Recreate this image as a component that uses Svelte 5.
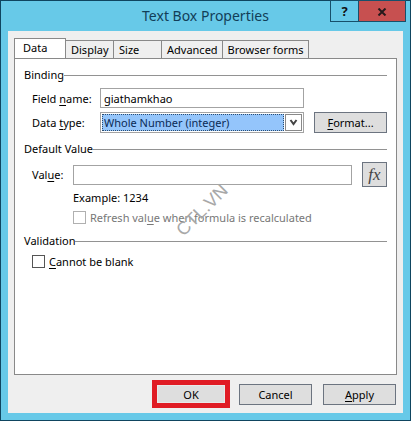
<script>
	let activeTab = "Data";
	let fieldName = "giathamkhao";
	let dataType = "integer";
	let defaultValue = "";
	let notBlank = false;

	const tabs = ["Data", "Display", "Size", "Advanced", "Browser forms"];
</script>

<main class="window">
	<header>
		<h1>Text Box Properties</h1>
		<div class="caption-buttons">
			<button class="help" aria-label="Help">?</button>
			<button class="close" aria-label="Close">
				<svg width="10" height="8" viewBox="0 0 10 8">
					<path d="M1.5 0.5 L8.5 7.5 M8.5 0.5 L1.5 7.5" />
				</svg>
			</button>
		</div>
	</header>

	<div class="body">
		<div class="tabs" role="tablist">
			{#each tabs as tab}
				<button
					class="tab"
					class:active={tab === activeTab}
					role="tab"
					aria-selected={tab === activeTab}
					on:click={() => (activeTab = tab)}>{tab}</button
				>
			{/each}
		</div>

		<div class="panel">
			<section>
				<h2>Binding</h2>
				<div class="row">
					<label class="wide" for="fieldName">Field <u>n</u>ame:</label>
					<input type="text" id="fieldName" bind:value={fieldName} />
					<span class="format-space"></span>
				</div>
				<div class="row type-row">
					<label class="wide" for="dataType">Data <u>t</u>ype:</label>
					<div class="select">
						<select id="dataType" bind:value={dataType}>
							<option value="integer">Whole Number (integer)</option>
						</select>
						<span class="arrow">
							<svg width="9" height="7" viewBox="0 0 9 7">
								<path d="M1.5 1 L4.5 5 L7.5 1" />
							</svg>
						</span>
					</div>
					<button class="push"><u>F</u>ormat...</button>
				</div>
			</section>

			<section>
				<h2>Default Value</h2>
				<div class="row">
					<label class="narrow" for="defaultValue">Val<u>u</u>e:</label>
					<input type="text" id="defaultValue" bind:value={defaultValue} />
					<button class="push fx" aria-label="Insert formula"><i>fx</i></button>
				</div>
				<div class="notes">
					<p>Example: 1234</p>
					<label class="check disabled">
						<input type="checkbox" disabled />
						<span>Refresh val<u>u</u>e when formula is recalculated</span>
					</label>
				</div>
			</section>

			<section>
				<h2>Validation</h2>
				<label class="check blank">
					<input type="checkbox" bind:checked={notBlank} />
					<span><u>C</u>annot be blank</span>
				</label>
			</section>

			<span class="watermark">CTL.VN</span>
		</div>

		<footer>
			<div class="highlight"><button class="push ok">OK</button></div>
			<button class="push">Cancel</button>
			<button class="push"><u>A</u>pply</button>
		</footer>
	</div>
</main>

<style>
	:global(body) {
		background: #67c9e8;
	}

	* {
		box-sizing: border-box;
	}

	.window {
		display: flex;
		flex-direction: column;
		min-height: 100vh;
		padding: 0 7px 7px;
		border: 1px solid #0f4560;
		background: #67c9e8;
		color: #000;
		font: 11px/15px "Noto Sans", "Open Sans", sans-serif;
	}

	button,
	input,
	select {
		margin: 0;
		color: inherit;
		font: inherit;
		border-radius: 0;
	}

	u {
		text-underline-offset: 2px;
	}

	/* Title bar */
	header {
		position: relative;
		height: 30px;
	}

	h1 {
		margin: 0;
		color: #123e58;
		font-size: 14px;
		font-weight: 400;
		line-height: 30px;
		text-align: center;
	}

	.caption-buttons {
		position: absolute;
		top: -1px;
		right: -3px;
		display: flex;
	}

	.caption-buttons button {
		width: 29px;
		height: 22px;
		padding: 0;
		border: 1px solid #17506b;
		background: none;
		color: #111;
		font-size: 13px;
		font-weight: 700;
		line-height: 20px;
	}

	.caption-buttons .close {
		width: 47px;
		border-left: 0;
		background: #c75050;
	}

	.close svg path {
		fill: none;
		stroke: #26191b;
		stroke-width: 2;
	}

	/* Dialog area */
	.body {
		display: flex;
		flex: 1;
		flex-direction: column;
		padding: 7px 6px 5px;
		background: #efefef;
	}

	.tabs {
		display: flex;
		align-items: flex-end;
	}

	.tab {
		min-width: 48px;
		height: 18px;
		padding: 0 4px 0 5px;
		border: 1px solid #898989;
		border-width: 1px 1px 0 0;
		background: #efefef;
		line-height: 17px;
		text-align: left;
	}

	.tab.active {
		position: relative;
		min-width: 52px;
		height: 21px;
		margin-bottom: -1px;
		padding: 0 8px 3px;
		border-left-width: 1px;
		background: #fff;
	}

	.panel {
		position: relative;
		flex: 1;
		padding: 8px 9px;
		border: 1px solid #898989;
		background: #fff;
	}

	h2 {
		display: flex;
		align-items: center;
		margin: 0;
		font-size: 11px;
		font-weight: 400;
		line-height: 16px;
	}

	h2::after {
		content: "";
		flex: 1;
		height: 1px;
		background: #929292;
	}

	.row {
		display: flex;
		align-items: center;
		gap: 10px;
		margin: 5px 0 0 8px;
	}

	.row label {
		flex: none;
		margin-right: -10px;
	}

	.wide {
		width: 68px;
	}

	.narrow {
		width: 41px;
	}

	.row input {
		flex: 1;
		min-width: 0;
		height: 20px;
		padding: 0 3px;
		border: 1px solid #a3a3a3;
		background: #fff;
	}

	.format-space {
		width: 73px;
	}

	.type-row {
		margin-top: 4px;
		margin-bottom: 8px;
	}

	.select {
		display: flex;
		flex: 1;
		gap: 1px;
		min-width: 0;
		height: 21px;
		padding: 1px;
		border: 1px solid #a3a3a3;
		background: #fff;
	}

	select {
		flex: 1;
		min-width: 0;
		padding: 0 1px;
		appearance: none;
		border: 1px dotted #2b4c70;
		background: #94c5fb;
		color: #0a2a55;
		line-height: 15px;
	}

	.arrow {
		display: flex;
		align-items: center;
		justify-content: center;
		width: 17px;
		border: 1px solid #898989;
		pointer-events: none;
	}

	.arrow path {
		fill: none;
		stroke: #444;
		stroke-width: 2;
	}

	.push {
		width: 73px;
		height: 21px;
		padding: 0;
		border: 1px solid #6c7480;
		background: #dedede;
	}

	.fx {
		width: 25px;
		height: 25px;
		color: #444;
		font-family: "Liberation Serif", serif;
		font-size: 17px;
	}

	.notes {
		margin: 3px 0 8px 49px;
	}

	.notes p {
		margin: 0 0 5px;
	}

	.check {
		display: flex;
		align-items: center;
		gap: 4px;
	}

	.check input {
		width: 13px;
		height: 13px;
		appearance: none;
		border: 1px solid #555;
		background: #fff;
	}

	.check input:checked {
		background: #555;
	}

	.disabled {
		color: #777;
	}

	.disabled input {
		border-color: #b0b0b0;
	}

	.blank {
		margin: 5px 0 0 8px;
	}

	.watermark {
		position: absolute;
		top: 141px;
		left: 49%;
		color: #a8a8a8;
		font: 18px/20px "Liberation Sans", sans-serif;
		transform: translateX(-50%) rotate(-45deg);
		pointer-events: none;
	}

	footer {
		display: flex;
		align-items: center;
		justify-content: flex-end;
		gap: 11px;
		padding: 5px 1px 0 0;
	}

	.highlight {
		margin-right: -2px;
		border: 5px solid #e01b24;
	}

	.ok {
		display: block;
		width: 68px;
		height: 18px;
		border-color: #e8e8e8;
	}
</style>
